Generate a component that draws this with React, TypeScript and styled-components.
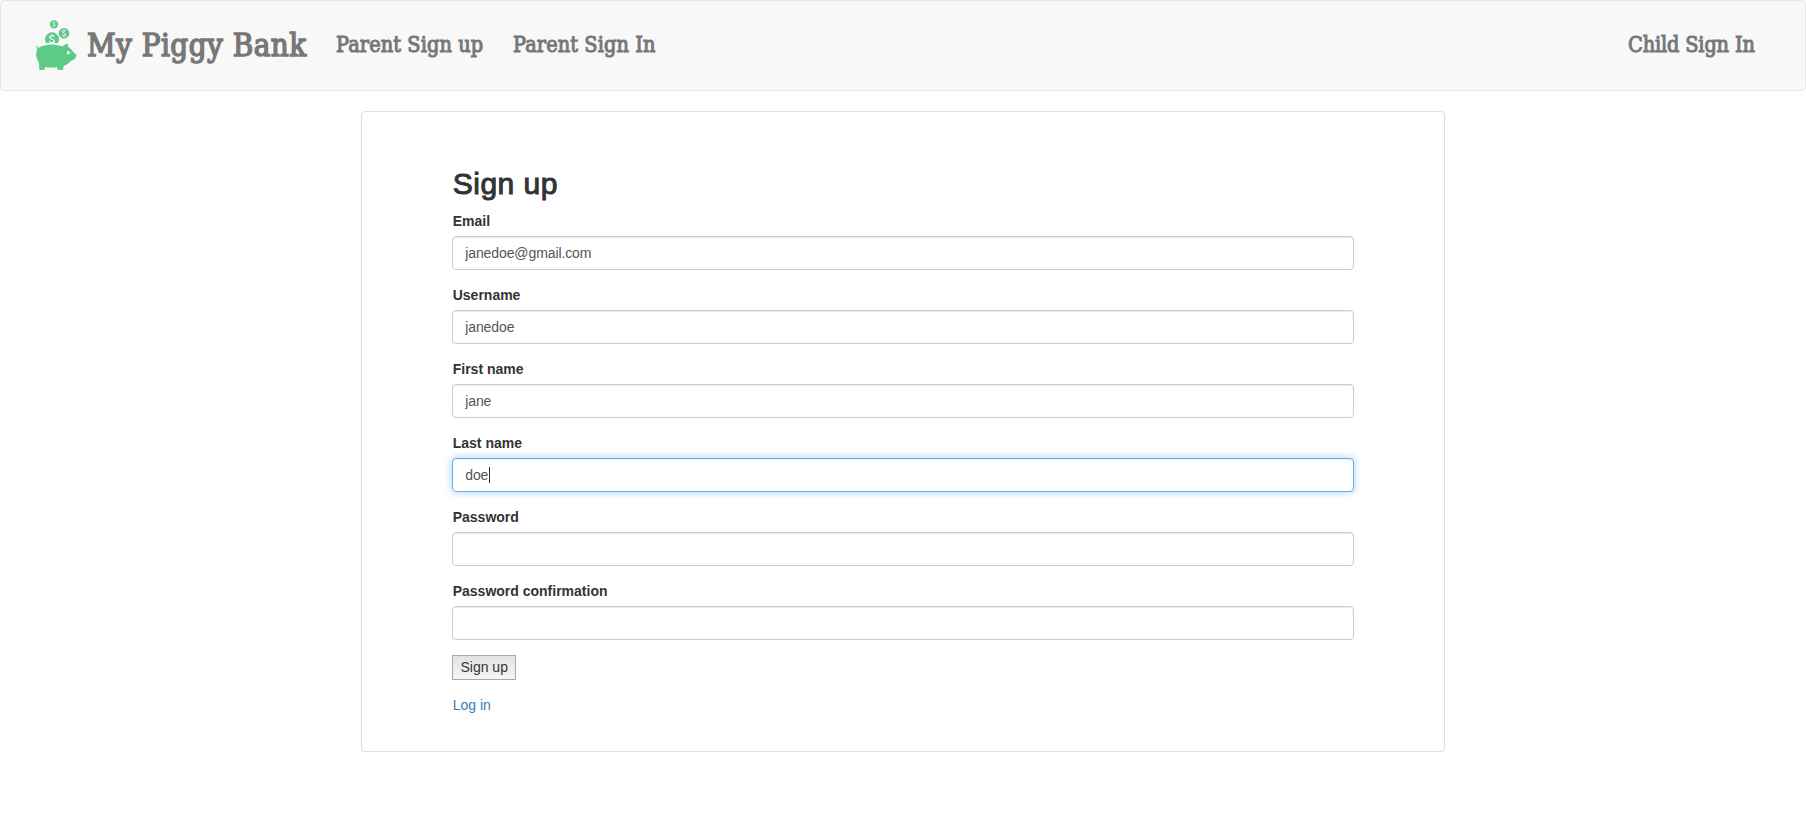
import React from "react";
import styled, { createGlobalStyle, css } from "styled-components";

const GlobalStyle = createGlobalStyle`
  *, *::before, *::after { box-sizing: border-box; }
  body {
    margin: 0;
    background: #fff;
    color: #333;
    font: 14px/20px "Helvetica Neue", Helvetica, "Liberation Sans", Arial, sans-serif;
  }
`;

const Navbar = styled.nav`
  display: flex;
  align-items: center;
  height: 91px;
  margin-bottom: 20px;
  padding: 0 51px 2px 35px;
  background: #f8f8f8;
  border: 1px solid #e7e7e7;
  border-radius: 4px;
`;

const Brand = styled.a`
  display: flex;
  align-items: center;
  margin-right: 29px;
  text-decoration: none;
`;

const Logo = styled.svg`
  display: block;
  width: 41px;
  height: 50px;
  margin-right: 10px;
`;

const SlabText = styled.span<{ $size: number; $width: number; $spacing: number }>`
  display: block;
  width: ${(p) => p.$width}px;
  color: #777;
  font-family: "DejaVu Serif Condensed", "DejaVu Serif", serif;
  font-stretch: condensed;
  font-weight: 400;
  -webkit-text-stroke: ${(p) => p.$size / 22}px #777;
  font-size: ${(p) => p.$size}px;
  line-height: 40px;
  letter-spacing: ${(p) => p.$spacing}px;
  white-space: nowrap;
`;

const NavLink = styled.a<{ $end?: boolean }>`
  text-decoration: none;
  margin-right: ${(p) => (p.$end ? 0 : 31)}px;
  margin-left: ${(p) => (p.$end ? "auto" : 0)};
`;

const Panel = styled.main`
  width: 60%;
  height: 641px;
  margin: 0 auto;
  padding: 56px 90px 0;
  border: 1px solid #ddd;
  border-radius: 4px;
  box-shadow: 0 1px 1px rgba(0, 0, 0, 0.05);
`;

const Title = styled.h2`
  margin: 0 0 10px;
  padding-left: 0.5px;
  font-size: 30px;
  line-height: 32px;
  height: 33px;
  font-weight: 400;
  letter-spacing: 0.5px;
  -webkit-text-stroke: 1px #333;
`;

const Field = styled.div`
  margin-bottom: 15px;
`;

const Label = styled.label`
  display: block;
  margin-bottom: 5px;
  padding-left: 0.5px;
  font-weight: 700;
`;

const Control = styled.div`
  position: relative;
`;

const Input = styled.input<{ $active?: boolean }>`
  display: block;
  width: 100%;
  height: 34px;
  padding: 6px 12px;
  border: 1px solid #ccc;
  border-radius: 4px;
  outline: none;
  background: #fff;
  color: #555;
  font: inherit;
  letter-spacing: -0.1px;
  box-shadow: inset 0 1px 1px rgba(0, 0, 0, 0.075);
  ${(p) =>
    p.$active &&
    css`
      border-color: #66afe9;
      box-shadow: inset 0 1px 1px rgba(0, 0, 0, 0.075), 0 0 8px rgba(102, 175, 233, 0.6);
    `}
`;

const Caret = styled.span`
  position: absolute;
  left: 37px;
  top: 9px;
  width: 1px;
  height: 16px;
  background: #333;
`;

const Submit = styled.button`
  display: block;
  width: 64px;
  height: 25px;
  margin-bottom: 15px;
  padding: 0 0 1px;
  border: 1px solid #a9a9a9;
  border-radius: 0;
  background: linear-gradient(#e2e2e2, #f6f6f6);
  color: #333;
  font: inherit;
  line-height: 22px;
`;

const TextLink = styled.a`
  padding-left: 0.5px;
  color: #337ab7;
  text-decoration: none;
`;

const fields = [
  { id: "email", label: "Email", value: "janedoe@gmail.com", type: "text" },
  { id: "username", label: "Username", value: "janedoe", type: "text" },
  { id: "first", label: "First name", value: "jane", type: "text" },
  { id: "last", label: "Last name", value: "doe", type: "text", active: true },
  { id: "password", label: "Password", value: "", type: "password" },
  { id: "confirm", label: "Password confirmation", value: "", type: "password" },
];

function Dollar({ x, y, scale }: { x: number; y: number; scale: number }) {
  return (
    <g transform={`translate(${x} ${y}) scale(${scale})`} fill="none" stroke="#f8f8f8" strokeWidth="3">
      <path d="M6 -6C5 -10 -6 -10 -6 -5C-6 0 6 -1 6 5C6 10 -5 10 -7 5M0 -13V-8M0 8V13" />
    </g>
  );
}

function PiggyLogo() {
  return (
    <Logo viewBox="0 0 123 150" aria-hidden="true">
      <g fill="#5dcb87">
        <circle cx="54" cy="13" r="12.5" />
        <circle cx="84" cy="40" r="16" />
        <circle cx="48" cy="58" r="21" />
      </g>
      <path d="M18 76C33 69 67 69 82 76" fill="none" stroke="#f8f8f8" strokeWidth="5" />
      <path
        fill="#5dcb87"
        d="M1 77C0 83 2 86 4 88C0 96 0 106 2 114C4 121 8 124 9 130L10 150H25L27 141Q45 144 62 141L66 150H81L83 138Q97 133 105 122L116 118Q121 111 121 103Q115 101 110 94Q105 86 98 82Q95 77 96 71Q85 73 79 79Q66 75 50 74Q26 74 13 80Q8 82 6 84Q3 83 5 79Z"
      />
      <circle cx="97" cy="98" r="5" fill="#f8f8f8" />
      <Dollar x={54} y={13} scale={0.65} />
      <Dollar x={84} y={40} scale={0.9} />
      <Dollar x={48} y={58} scale={1.2} />
    </Logo>
  );
}

export default function App() {
  return (
    <>
      <GlobalStyle />
      <Navbar>
        <Brand>
          <PiggyLogo />
          <SlabText $size={31} $width={220} $spacing={0.5}>My Piggy Bank</SlabText>
        </Brand>
        <NavLink>
          <SlabText $size={21.5} $width={146} $spacing={0.1}>Parent Sign up</SlabText>
        </NavLink>
        <NavLink>
          <SlabText $size={21.5} $width={143} $spacing={0.1}>Parent Sign In</SlabText>
        </NavLink>
        <NavLink $end>
          <SlabText $size={21.5} $width={126} $spacing={-0.15}>Child Sign In</SlabText>
        </NavLink>
      </Navbar>
      <Panel>
        <Title>Sign up</Title>
        {fields.map((f) => (
          <Field key={f.id}>
            <Label htmlFor={f.id}>{f.label}</Label>
            <Control>
              <Input id={f.id} type={f.type} defaultValue={f.value} $active={f.active} />
              {f.active && <Caret />}
            </Control>
          </Field>
        ))}
        <Submit type="button">Sign up</Submit>
        <TextLink>Log in</TextLink>
      </Panel>
    </>
  );
}
